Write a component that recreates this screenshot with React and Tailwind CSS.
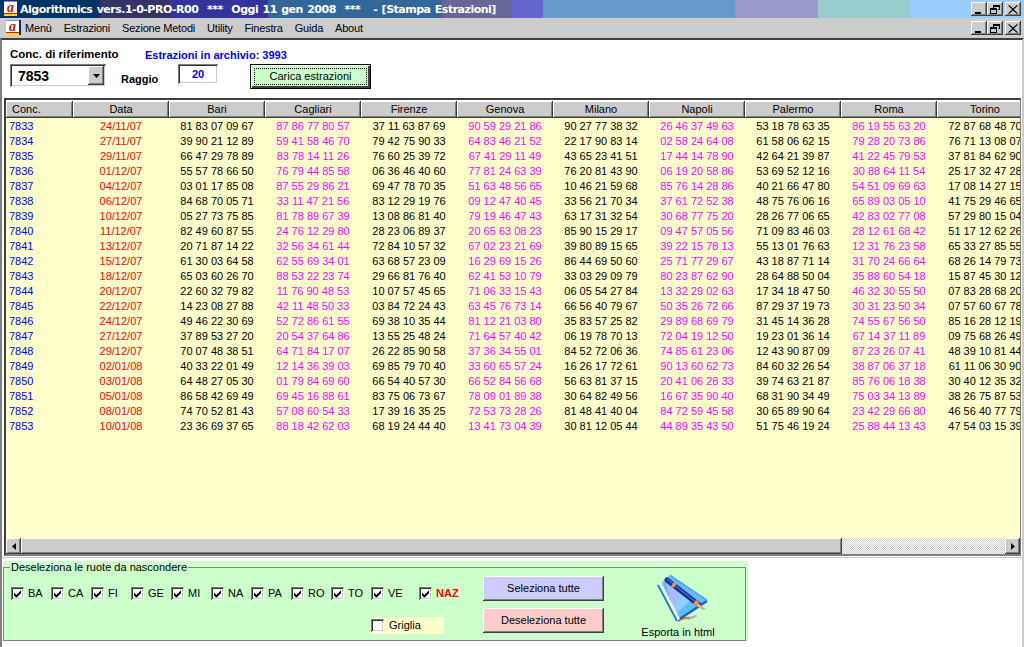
import React from 'react';

const DATE = ['24/11/07','27/11/07','29/11/07','01/12/07','04/12/07','06/12/07','10/12/07','11/12/07','13/12/07','15/12/07','18/12/07','20/12/07','22/12/07','24/12/07','27/12/07','29/12/07','02/01/08','03/01/08','05/01/08','08/01/08','10/01/08'];

// one entry per ruota, 21 draws each
const RUOTE = [
  { nome: 'Bari', rosa: false, righe: ['81 83 07 09 67','39 90 21 12 89','66 47 29 78 89','55 57 78 66 50','03 01 17 85 08','84 68 70 05 71','05 27 73 75 85','82 49 60 87 55','20 71 87 14 22','61 30 03 64 58','65 03 60 26 70','22 60 32 79 82','14 23 08 27 88','49 46 22 30 69','37 89 53 27 20','70 07 48 38 51','40 33 22 01 49','64 48 27 05 30','86 58 42 69 49','74 70 52 81 43','23 36 69 37 65'] },
  { nome: 'Cagliari', rosa: true, righe: ['87 86 77 80 57','59 41 58 46 70','83 78 14 11 26','76 79 44 85 58','87 55 29 86 21','33 11 47 21 56','81 78 89 67 39','24 76 12 29 80','32 56 34 61 44','62 55 69 34 01','88 53 22 23 74','11 76 90 48 53','42 11 48 50 33','52 72 86 61 55','20 54 37 64 86','64 71 84 17 07','12 14 36 39 03','01 79 84 69 60','69 45 16 88 61','57 08 60 54 33','88 18 42 62 03'] },
  { nome: 'Firenze', rosa: false, righe: ['37 11 63 87 69','79 42 75 90 33','76 60 25 39 72','06 36 46 40 60','69 47 78 70 35','83 12 29 19 76','13 08 86 81 40','28 23 06 89 37','72 84 10 57 32','63 68 57 23 09','29 66 81 76 40','10 07 57 45 65','03 84 72 24 43','69 38 10 35 44','13 55 25 48 24','26 22 85 90 58','69 85 79 70 40','66 54 40 57 30','83 75 06 73 67','17 39 16 35 25','68 19 24 44 40'] },
  { nome: 'Genova', rosa: true, righe: ['90 59 29 21 86','64 83 46 21 52','67 41 29 11 49','77 81 24 63 39','51 63 48 56 65','09 12 47 40 45','79 19 46 47 43','20 65 63 08 23','67 02 23 21 69','16 29 69 15 26','62 41 53 10 79','71 06 33 15 43','63 45 76 73 14','81 12 21 03 80','71 64 57 40 42','37 36 34 55 01','33 60 65 57 24','66 52 84 56 68','78 09 01 89 38','72 53 73 28 26','13 41 73 04 39'] },
  { nome: 'Milano', rosa: false, righe: ['90 27 77 38 32','22 17 90 83 14','43 65 23 41 51','76 20 81 43 90','10 46 21 59 68','33 56 21 70 34','63 17 31 32 54','85 90 15 29 17','39 80 89 15 65','86 44 69 50 60','33 03 29 09 79','06 05 54 27 84','66 56 40 79 67','35 83 57 25 82','06 19 78 70 13','84 52 72 06 36','16 26 17 72 61','56 63 81 37 15','30 64 82 49 56','81 48 41 40 04','30 81 12 05 44'] },
  { nome: 'Napoli', rosa: true, righe: ['26 46 37 49 63','02 58 24 64 08','17 44 14 78 90','06 19 20 58 86','85 76 14 28 86','37 61 72 52 38','30 68 77 75 20','09 47 57 05 56','39 22 15 78 13','25 71 77 29 67','80 23 87 62 90','13 32 29 02 63','50 35 26 72 66','29 89 68 69 79','72 04 19 12 50','74 85 61 23 06','90 13 60 62 73','20 41 06 28 33','16 67 35 90 40','84 72 59 45 58','44 89 35 43 50'] },
  { nome: 'Palermo', rosa: false, righe: ['53 18 78 63 35','61 58 06 62 15','42 64 21 39 87','53 69 52 12 16','40 21 66 47 80','48 75 76 06 16','28 26 77 06 65','71 09 83 46 03','55 13 01 76 63','43 18 87 71 14','28 64 88 50 04','17 34 18 47 50','87 29 37 19 73','31 45 14 36 28','19 23 01 36 14','12 43 90 87 09','84 60 32 26 54','39 74 63 21 87','68 31 90 34 49','30 65 89 90 64','51 75 46 19 24'] },
  { nome: 'Roma', rosa: true, righe: ['86 19 55 63 20','79 28 20 73 86','41 22 45 79 53','30 88 64 11 54','54 51 09 69 63','65 89 03 05 10','42 83 02 77 08','28 12 61 68 42','12 31 76 23 58','31 70 24 66 64','35 88 60 54 18','46 32 30 55 50','30 31 23 50 34','74 55 67 56 50','67 14 37 11 89','87 23 26 07 41','38 87 06 37 18','85 76 06 18 38','75 03 34 13 89','23 42 29 66 80','25 88 44 13 43'] },
  { nome: 'Torino', rosa: false, righe: ['72 87 68 48 70','76 71 13 08 07','37 81 84 62 90','25 17 32 47 28','17 08 14 27 15','41 75 29 46 65','57 29 80 15 04','51 17 12 62 26','65 33 27 85 55','68 26 14 79 73','15 87 45 30 12','07 83 28 68 20','07 57 60 67 78','85 16 28 12 19','09 75 68 26 49','48 39 10 81 44','61 11 06 30 90','30 40 12 35 32','38 26 75 87 53','46 56 40 77 79','47 54 03 15 39'] },
];

const MENU = ['Menù', 'Estrazioni', 'Sezione Metodi', 'Utility', 'Finestra', 'Guida', 'About'];
const SIGLE = ['BA', 'CA', 'FI', 'GE', 'MI', 'NA', 'PA', 'RO', 'TO', 'VE'];
const TITOLO = [
  ['w-[100px]', 'bg-[#003366]'], ['w-[70px]', 'bg-[#333366]'], ['w-[98px]', 'bg-[#333399]'],
  ['w-[174px]', 'bg-[#336699]'], ['w-[70px]', 'bg-[#666699]'], ['w-[31px]', 'bg-[#6666cc]'],
  ['w-[192px]', 'bg-[#6699cc]'], ['w-[83px]', 'bg-[#9999cc]'], ['w-[92px]', 'bg-[#99cccc]'], ['w-[114px]', 'bg-[#99ccff]'],
];

const RAISED = 'shadow-[inset_-1px_-1px_0_#404040,inset_1px_1px_0_#ffffff,inset_-2px_-2px_0_#808080]';
const SUNKEN = 'shadow-[inset_1px_1px_0_#808080,inset_-1px_-1px_0_#ffffff,inset_2px_2px_0_#303030,inset_-2px_-2px_0_#cccccc]';

const Logo = () => (
  <svg width="15" height="16" viewBox="0 0 15 16" className="shrink-0">
    <rect x="0" y="0" width="13" height="13" fill="#ffffff" />
    <rect x="13" y="0" width="2" height="15" fill="#102a6b" />
    <rect x="0" y="0" width="13" height="1" fill="#8090c0" />
    <rect x="0" y="13" width="13" height="2" fill="#ffd800" />
    <rect x="0" y="12" width="13" height="1" fill="#e01010" />
    <text x="6.500" y="10.500" textAnchor="middle" fontSize="14" fontWeight="700" fontStyle="italic" fill="#d01818" fontFamily="'Liberation Serif', serif">a</text>
  </svg>
);

const WinButton = ({ tipo, className = '' }) => (
  <div className={`w-[16px] h-[14px] bg-[#cccccc] flex items-center justify-center ${RAISED} ${className}`}>
    <svg width="10" height="9" viewBox="0 0 10 9" shapeRendering="crispEdges">
      {tipo === 'min' && <rect x="1" y="7" width="6" height="2" fill="#000" />}
      {tipo === 'max' && (
        <>
          <path d="M3.500 2.500V.5h6v4H7.500" fill="none" stroke="#000" />
          <rect x="3" y="0" width="7" height="1.600" fill="#000" />
          <path d="M.5 3.500h6v5h-6z" fill="none" stroke="#000" />
          <rect x="0" y="3" width="7" height="1.600" fill="#000" />
        </>
      )}
      {tipo === 'close' && <path d="M1 0l4 3.600L9 0l.8.8L5.800 4.500 9.800 8.200 9 9 5 5.400 1 9l-.8-.8 4-3.700-4-3.700z" fill="#000" shapeRendering="auto" />}
    </svg>
  </div>
);

const WinButtons = () => (
  <div className="flex">
    <WinButton tipo="min" />
    <WinButton tipo="max" />
    <WinButton tipo="close" className="ml-[2px]" />
  </div>
);

const Check = ({ checked = true }) => (
  <div className={`w-[13px] h-[13px] bg-white shrink-0 flex items-center justify-center ${SUNKEN}`}>
    {checked && (
      <svg width="9" height="9" viewBox="0 0 9 9">
        <path d="M1 3.500l2.400 2.400L8 1.200v3L3.400 8.800 1 6.400z" fill="#000" />
      </svg>
    )}
  </div>
);

const Libro = () => (
  <svg width="60" height="50" viewBox="0 0 60 50" className="shrink-0">
    <path d="M30 47c4-3 9-4 14-3l-5 2c-3 0-6 1-9 3z" fill="#d8742c" />
    <path d="M38 46l9-4 3 1-9 4z" fill="#b9b0a0" />
    <path d="M22 2l37 25-29 19L13 10z" fill="#62baf8" />
    <path d="M18 10l19 13-12 14z" fill="#a8bcf4" />
    <path d="M33 20l10 7-14 13-4-4z" fill="#8fd0fb" />
    <path d="M22 2l37 25" stroke="#2f8fe6" strokeWidth="1" fill="none" />
    <path d="M59 28L30 47" stroke="#1b5fc0" strokeWidth="2.400" fill="none" />
    <path d="M10 12l19 36 3-2-18-35 2-2z" fill="#f1f8ff" />
    <path d="M10 12l19 36" stroke="#1c78d8" strokeWidth="1.800" fill="none" />
    <path d="M19 7l32 25" stroke="#182f9c" strokeWidth="5" strokeLinecap="round" fill="none" />
    <path d="M19 6l30 24" stroke="#6f86e0" strokeWidth="1" fill="none" />
    <path d="M26 9l-3 4 2.500 2 3-4z" fill="#e89a3c" />
    <path d="M48 27l-3 4 3 2 3-4z" fill="#e89a3c" />
    <path d="M50 30l8 6-3 1-7-4z" fill="#d8b088" />
  </svg>
);

export default function App() {
  return (
    <div className="w-[1024px] h-[647px] overflow-hidden bg-white flex flex-col text-[11px] leading-none text-black font-['Liberation_Sans',Arial,sans-serif]">
      {/* barra del titolo */}
      <div className="relative h-[18px] shrink-0 flex">
        {TITOLO.map(([w, bg]) => <div key={bg} className={`h-full ${w} ${bg}`} />)}
        <div className="absolute inset-0 flex items-center pl-[4px] pr-[3px]">
          <Logo />
          <span className="ml-[1px] whitespace-pre text-white font-bold text-[11px] font-['DejaVu_Sans',sans-serif] tracking-[-0.5px] [word-spacing:1px]">{'Algorithmics vers.1-0-PRO-R00  ***  Oggi 11 gen 2008  ***   - [Stampa Estrazioni]'}</span>
          <div className="ml-auto"><WinButtons /></div>
        </div>
      </div>

      {/* menu */}
      <div className="h-[20px] shrink-0 bg-[#cccccc] flex items-center pl-[6px] pr-[3px]">
        <Logo />
        <div className="flex gap-[12px] ml-[4px] text-[11px] tracking-[-0.2px]">
          {MENU.map(m => <span key={m}>{m}</span>)}
        </div>
        <div className="ml-auto"><WinButtons /></div>
      </div>

      <div className="flex-1 flex flex-col min-h-0 border-t-2 border-t-[#404040] border-l-2 border-l-[#808080] border-r-2 border-r-[#cccccc]">
        {/* filtri */}
        <div className="h-[58px] shrink-0 pl-[8px] pt-[8px]">
          <div className="flex items-center h-[14px]">
            <span className="w-[135px] font-bold text-[11.500px]">Conc. di riferimento</span>
            <span className="font-bold text-[#0000ff] text-[11px]">Estrazioni in archivio: 3993</span>
          </div>
          <div className="flex items-start mt-[2px]">
            <div className={`w-[96px] h-[23px] bg-white flex items-center justify-between pl-[8px] pr-[2px] ${SUNKEN}`}>
              <span className="font-bold text-[14px]">7853</span>
              <div className={`w-[16px] h-[19px] bg-[#cccccc] flex items-center justify-center ${RAISED}`}>
                <svg width="7" height="4" viewBox="0 0 7 4"><path d="M0 0h7L3.500 4z" fill="#000" /></svg>
              </div>
            </div>
            <span className="ml-[15px] w-[57px] mt-[10px] font-bold">Raggio</span>
            <div className={`w-[40px] h-[20px] bg-white flex items-center justify-center font-bold text-[#0000ff] ${SUNKEN}`}>20</div>
            <button className="ml-[32px] w-[121px] h-[25px] bg-[#ccffcc] border border-black shadow-[inset_1px_1px_0_#ffffff,inset_-2px_-2px_0_#404040] p-[3px] text-[11px]">
              <div className="w-full h-full flex items-center justify-center border border-dotted border-black">Carica estrazioni</div>
            </button>
          </div>
        </div>

        {/* griglia */}
        <div className="h-[458px] shrink-0 mr-[1px] ml-[2px] flex flex-col border-t-2 border-t-[#404040] border-l-2 border-l-[#404040] border-r border-r-[#808080] border-b-2 border-b-[#808080] overflow-hidden">
          <div className="flex h-[18px] shrink-0 pt-[1px] bg-white">
            <div className={`w-[67px] shrink-0 h-[17px] bg-[#cccccc] flex items-center pl-[6px] ${RAISED}`}>Conc.</div>
            <div className={`w-[96px] shrink-0 h-[17px] bg-[#cccccc] flex items-center justify-center ${RAISED}`}>Data</div>
            {RUOTE.map(r => (
              <div key={r.nome} className={`w-[96px] shrink-0 h-[17px] bg-[#cccccc] flex items-center justify-center ${RAISED}`}>{r.nome}</div>
            ))}
          </div>
          <div className="flex-1 min-h-0 bg-[#ffffcc] pt-[1px] overflow-hidden">
            {DATE.map((d, i) => (
              <div key={d} className="flex h-[15px] items-center">
                <div className="w-[67px] shrink-0 pl-[3px] text-[#0000ff]">{7833 + i}</div>
                <div className="w-[96px] shrink-0 text-center text-[#ff0000]">{d}</div>
                {RUOTE.map(r => (
                  <div key={r.nome} className={`w-[96px] shrink-0 text-center whitespace-pre ${r.rosa ? 'text-[#ff00ff]' : 'text-black'}`}>{r.righe[i]}</div>
                ))}
              </div>
            ))}
          </div>
          {/* scrollbar orizzontale */}
          <div className="h-[16px] shrink-0 flex">
            <div className={`w-[15px] bg-[#cccccc] flex items-center justify-center ${RAISED}`}>
              <svg width="4" height="7" viewBox="0 0 4 7"><path d="M4 0v7L0 3.500z" fill="#000" /></svg>
            </div>
            <div className={`w-[821px] bg-[#cccccc] ${RAISED}`} />
            <div className="flex-1 bg-[repeating-conic-gradient(#ffffff_0_25%,#cccccc_0_50%)] bg-[length:2px_2px]" />
            <div className={`w-[15px] bg-[#cccccc] flex items-center justify-center ${RAISED}`}>
              <svg width="4" height="7" viewBox="0 0 4 7"><path d="M0 0v7l4-3.500z" fill="#000" /></svg>
            </div>
          </div>
        </div>

        <div className="h-[1px] shrink-0 mt-[1px] bg-[#cccccc]" />

        {/* pannello ruote */}
        <div className="w-[745px] h-[80px] shrink-0 mt-[3px] ml-[1px] bg-[#ccffcc]">
          <fieldset className="w-[743px] h-[80px] border border-[#808080] px-[7px]">
            <legend className="-ml-[1px] px-[1px] text-[11px] h-[13px] leading-[13px]">Deseleziona le ruote da nascondere</legend>
            <div className="flex">
              <div className="w-[472px] shrink-0">
                <div className="flex items-center mt-[12px] h-[14px]">
                  {SIGLE.map(s => (
                    <div key={s} className="w-[40px] flex items-center gap-[4px] shrink-0">
                      <Check />
                      <span>{s}</span>
                    </div>
                  ))}
                  <div className="ml-[8px] flex items-center gap-[4px]">
                    <Check />
                    <span className="font-bold text-[#ff0000]">NAZ</span>
                  </div>
                </div>
                <div className="ml-[360px] mt-[17px] w-[73px] h-[17px] bg-[#ffffcc] flex items-center gap-[5px]">
                  <Check checked={false} />
                  <span>Griglia</span>
                </div>
              </div>
              <div className="w-[121px] shrink-0 mt-[2px]">
                <button className={`w-full h-[25px] bg-[#ccccff] text-[11px] block ${RAISED}`}>Seleziona tutte</button>
                <button className={`w-full h-[25px] mt-[7px] bg-[#ffcccc] text-[11px] block ${RAISED}`}>Deseleziona tutte</button>
              </div>
              <div className="ml-[38px] w-[72px] flex flex-col items-center -mt-[1px]">
                <Libro />
                <span className="text-[11px] whitespace-nowrap mt-[4px]">Esporta in html</span>
              </div>
            </div>
          </fieldset>
        </div>
      </div>
    </div>
  );
}
